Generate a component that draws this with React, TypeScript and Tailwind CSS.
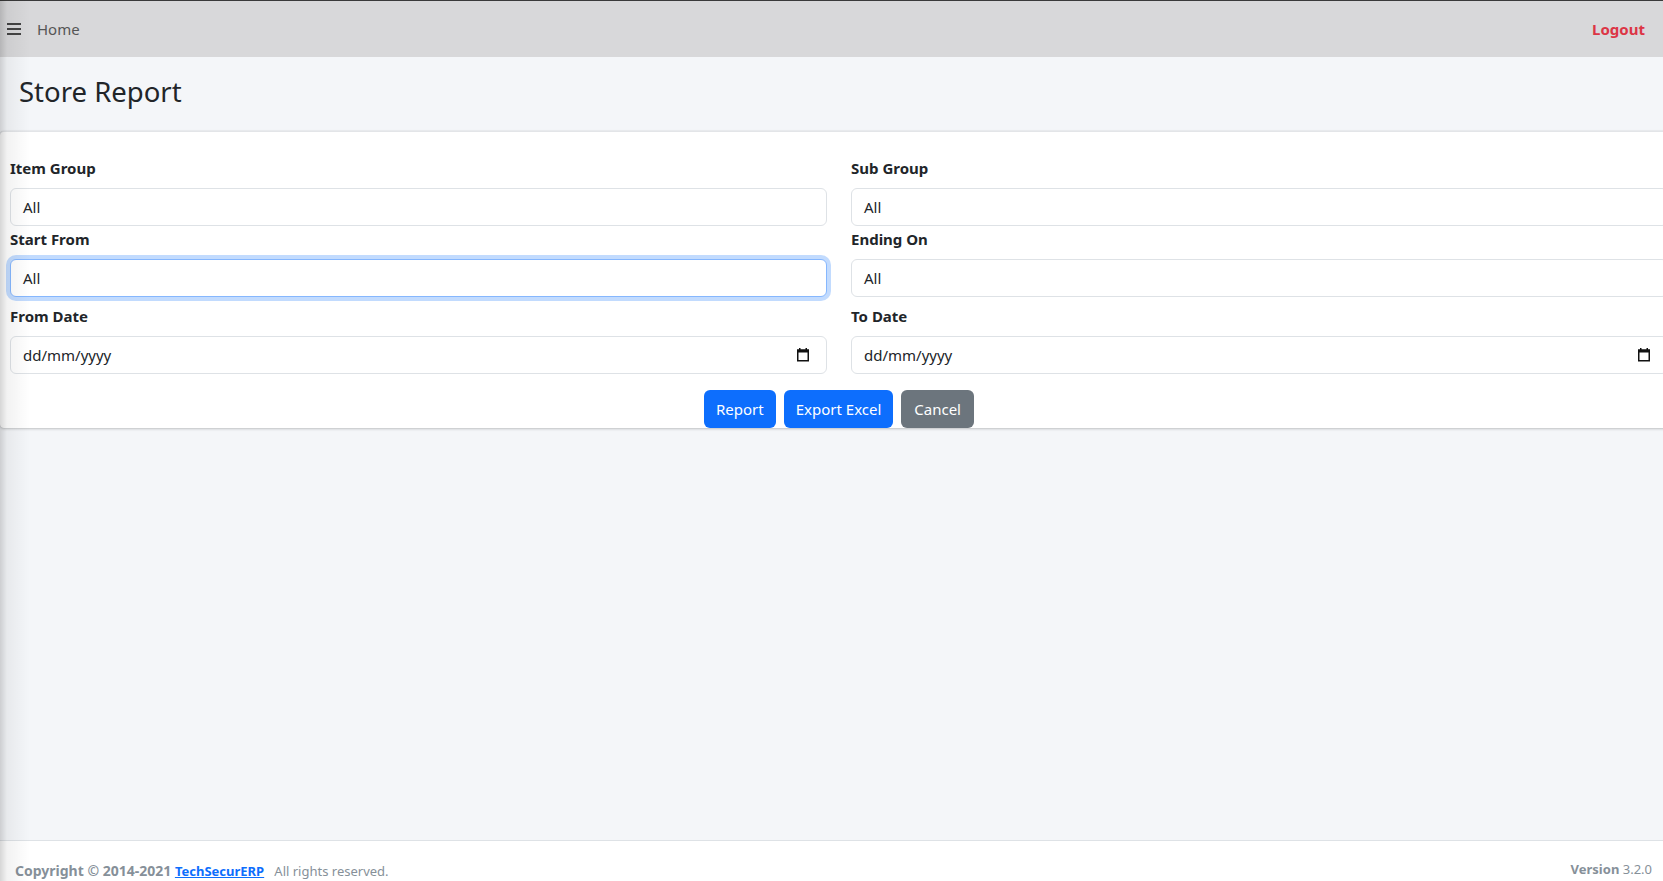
import React from "react";

const font = { fontFamily: '"Noto Sans", "Open Sans", sans-serif' };

function Hamburger() {
  return (
    <svg width="14" height="12" viewBox="0 0 14 12" className="block">
      <rect x="0" y="0" width="14" height="2" fill="#444" />
      <rect x="0" y="5" width="14" height="2" fill="#444" />
      <rect x="0" y="10" width="14" height="2" fill="#444" />
    </svg>
  );
}

function CalendarIcon() {
  return (
    <svg width="14" height="14" viewBox="0 0 14 14" className="block">
      <rect x="3" y="0" width="1.5" height="2" fill="#111" />
      <rect x="9.5" y="0" width="1.5" height="2" fill="#111" />
      <rect x="1" y="1.5" width="12" height="3" fill="#111" />
      <rect x="1.75" y="2.25" width="10.5" height="10.5" fill="none" stroke="#111" strokeWidth="1.5" />
    </svg>
  );
}

interface FieldProps {
  label: string;
  value: string;
  focused?: boolean;
  date?: boolean;
  className?: string;
}

function Field({ label, value, focused, date, className }: FieldProps) {
  return (
    <div className={className}>
      <label className="block h-6 leading-6 text-[15px] font-bold text-[#212529] mb-[8px]">{label}</label>
      <div
        className={`flex items-center h-[38px] rounded-[6px] bg-white pl-3 pr-4 text-[15px] text-[#212529] ${
          focused
            ? "border border-[#86b7fe] shadow-[0_0_0_4px_rgba(13,110,253,0.25)]"
            : "border border-[#dee2e6]"
        }`}
      >
        <span className="flex-1">{value}</span>
        {date && <CalendarIcon />}
      </div>
    </div>
  );
}

export default function App() {
  return (
    <div className="relative w-full h-[881px] overflow-hidden bg-[#f4f6f9] flex flex-col" style={font}>
      {/* top navbar */}
      <nav className="flex items-center justify-between h-[57px] bg-[#d8d8da] border-t border-[#3a3a3a] shrink-0">
        <div className="flex items-center">
          <div className="pl-[7px] pr-4">
            <Hamburger />
          </div>
          <a className="text-[15px] text-[#555]">Home</a>
        </div>
        <a className="text-[15px] font-bold text-[#dc3545] pr-[18px]">Logout</a>
      </nav>

      {/* page header */}
      <div className="h-[74px] shrink-0 flex items-center pl-[19px]">
        <h1 className="text-[27.5px] leading-none text-[#212529] font-normal -mt-[4px]">Store Report</h1>
      </div>

      {/* filter card */}
      <div className="w-[1678px] shrink-0 bg-white rounded-[4px] border-t border-[#e3e5e8] shadow-[0_0_1px_rgba(0,0,0,0.2),0_1px_3px_rgba(0,0,0,0.2)] px-[10px] pt-[24px]">
        <div className="grid grid-cols-2 gap-x-6">
          <Field label="Item Group" value="All" />
          <Field label="Sub Group" value="All" />
          <Field label="Start From" value="All" focused className="mt-[1px]" />
          <Field label="Ending On" value="All" className="mt-[1px]" />
          <Field label="From Date" value="dd/mm/yyyy" date className="mt-[7px]" />
          <Field label="To Date" value="dd/mm/yyyy" date className="mt-[7px]" />
        </div>
        <div className="flex justify-center gap-2 mt-4">
          <button className="h-[38px] px-3 rounded-[6px] bg-[#0d6efd] text-white text-[15px]">Report</button>
          <button className="h-[38px] px-3 rounded-[6px] bg-[#0d6efd] text-white text-[15px]">Export Excel</button>
          <button className="h-[38px] px-[13px] rounded-[6px] bg-[#6c757d] text-white text-[15px]">Cancel</button>
        </div>
      </div>

      <div className="flex-1" />

      {/* footer */}
      <footer className="h-[41px] shrink-0 bg-white border-t border-[#dee2e6] flex items-start justify-between pt-[19px] pl-[15px] pr-[11px] text-[13px] text-[#869099]">
        <div>
          <strong className="text-[14px]">Copyright © 2014-2021 </strong>
          <a className="font-bold text-[#0d6efd] underline">TechSecurERP</a>
          <span>&nbsp;&nbsp; All rights reserved.</span>
        </div>
        <div>
          <b>Version</b> 3.2.0
        </div>
      </footer>

      {/* collapsed sidebar edge shadow */}
      <div className="pointer-events-none absolute left-0 top-0 bottom-0 w-[32px] bg-[linear-gradient(to_right,rgba(0,0,0,0.16),rgba(0,0,0,0.05)_7px,rgba(0,0,0,0)_30px)]" />
    </div>
  );
}
